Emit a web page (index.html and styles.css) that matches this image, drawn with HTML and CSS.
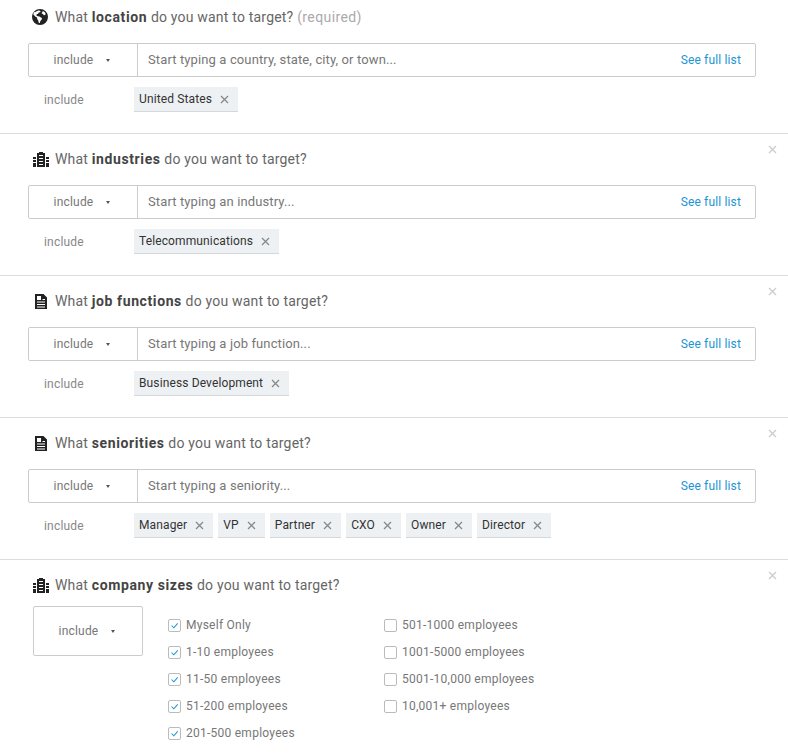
FILE: index.html
```html
<!DOCTYPE html>
<html lang="en">
<head>
<meta charset="utf-8">
<title>Targeting</title>
<link rel="stylesheet" href="styles.css">
</head>
<body>
<svg class="defs" width="0" height="0" aria-hidden="true">
  <symbol id="i-globe" viewBox="0 0 16 16">
    <path fill-rule="evenodd" d="M8 0a8 8 0 1 0 0 16A8 8 0 0 0 8 0zM3.200 3.200C4.400 2 6 1.400 7.400 1.400l1.200.9-.5 1-1.300.2-.7 1.200-1.500.5-.2 1.300 1.300.8 1.800.1 1.300 1 1.200.5-.3 1.500-1.300 1.500-.6 2-1 .1-.6-2.600-1-1.400-.2-1.500-1.800-1-1.900-2.200c.1-.9.5-1.600 1.400-2.600zM10.300 1.800c1.400.5 2.600 1.400 3.300 2.700l-.4 1.500-1.300.2-1-1.300-1.200-.3.3-1.300.9-.4z"/>
  </symbol>
  <symbol id="i-building" viewBox="0 0 16 15">
    <path fill-rule="evenodd" d="M6 0h4v1h2v14H4V1h2zM6 3v1h4V3zM6 6v1h4V6zM6 9v1h4V9zM6 12v1h4v-1z"/>
    <path d="M0 5h3v2H0zM0 8h3v2H0zM0 11h3v4H0zM13 5h3v2h-3zM13 8h3v2h-3zM13 11h3v4h-3z"/>
  </symbol>
  <symbol id="i-doc" viewBox="0 0 12 15">
    <path fill-rule="evenodd" d="M0 0h8.500L12 3.500V15H0zM2 2v4h4V2zM7.500 5v1H10V5zM2 7.500v1h8v-1zM2 10v1h8v-1zM2 12.500v1h8v-1z"/>
  </symbol>
  <symbol id="i-x" viewBox="0 0 9 9">
    <path d="M1 1l7 7M8 1L1 8" fill="none" stroke="currentColor" stroke-width="1.300"/>
  </symbol>
  <symbol id="i-check" viewBox="0 0 13 13">
    <path d="M3 6.500l2.700 2.700L10.300 4" fill="none" stroke="#1b95d4" stroke-width="1.200"/>
  </symbol>
</svg>

<section class="block block-first">
  <h2 class="title"><svg class="icon icon-globe"><use href="#i-globe"/></svg><span>What <b>location</b> do you want to target? <em>(required)</em></span></h2>
  <div class="search">
    <div class="select">include <i class="caret"></i></div>
    <div class="placeholder">Start typing a country, state, city, or town...</div>
    <a class="full" href="#">See full list</a>
  </div>
  <div class="chosen">
    <span class="mode">include</span>
    <span class="chip">United States <svg class="chip-x"><use href="#i-x"/></svg></span>
  </div>
</section>

<section class="block">
  <svg class="close"><use href="#i-x"/></svg>
  <h2 class="title"><svg class="icon icon-building"><use href="#i-building"/></svg><span>What <b>industries</b> do you want to target?</span></h2>
  <div class="search">
    <div class="select">include <i class="caret"></i></div>
    <div class="placeholder">Start typing an industry...</div>
    <a class="full" href="#">See full list</a>
  </div>
  <div class="chosen">
    <span class="mode">include</span>
    <span class="chip">Telecommunications <svg class="chip-x"><use href="#i-x"/></svg></span>
  </div>
</section>

<section class="block">
  <svg class="close"><use href="#i-x"/></svg>
  <h2 class="title"><svg class="icon icon-doc"><use href="#i-doc"/></svg><span>What <b>job functions</b> do you want to target?</span></h2>
  <div class="search">
    <div class="select">include <i class="caret"></i></div>
    <div class="placeholder">Start typing a job function...</div>
    <a class="full" href="#">See full list</a>
  </div>
  <div class="chosen">
    <span class="mode">include</span>
    <span class="chip">Business Development <svg class="chip-x"><use href="#i-x"/></svg></span>
  </div>
</section>

<section class="block">
  <svg class="close"><use href="#i-x"/></svg>
  <h2 class="title"><svg class="icon icon-doc"><use href="#i-doc"/></svg><span>What <b>seniorities</b> do you want to target?</span></h2>
  <div class="search">
    <div class="select">include <i class="caret"></i></div>
    <div class="placeholder">Start typing a seniority...</div>
    <a class="full" href="#">See full list</a>
  </div>
  <div class="chosen">
    <span class="mode">include</span>
    <span class="chip">Manager <svg class="chip-x"><use href="#i-x"/></svg></span>
    <span class="chip">VP <svg class="chip-x"><use href="#i-x"/></svg></span>
    <span class="chip">Partner <svg class="chip-x"><use href="#i-x"/></svg></span>
    <span class="chip">CXO <svg class="chip-x"><use href="#i-x"/></svg></span>
    <span class="chip">Owner <svg class="chip-x"><use href="#i-x"/></svg></span>
    <span class="chip">Director <svg class="chip-x"><use href="#i-x"/></svg></span>
  </div>
</section>

<section class="block block-last">
  <svg class="close"><use href="#i-x"/></svg>
  <h2 class="title"><svg class="icon icon-building"><use href="#i-building"/></svg><span>What <b>company sizes</b> do you want to target?</span></h2>
  <div class="sizes">
    <div class="select select-box">include <i class="caret"></i></div>
    <ul class="checks">
      <li><span class="box"><svg><use href="#i-check"/></svg></span>Myself Only</li>
      <li><span class="box"><svg><use href="#i-check"/></svg></span>1-10 employees</li>
      <li><span class="box"><svg><use href="#i-check"/></svg></span>11-50 employees</li>
      <li><span class="box"><svg><use href="#i-check"/></svg></span>51-200 employees</li>
      <li><span class="box"><svg><use href="#i-check"/></svg></span>201-500 employees</li>
    </ul>
    <ul class="checks">
      <li><span class="box"></span>501-1000 employees</li>
      <li><span class="box"></span>1001-5000 employees</li>
      <li><span class="box"></span>5001-10,000 employees</li>
      <li><span class="box"></span>10,001+ employees</li>
    </ul>
  </div>
</section>
</body>
</html>
```

FILE: styles.css
```css
* { box-sizing: border-box; }
html, body { margin: 0; padding: 0; }
body {
  width: 788px;
  height: 753px;
  overflow: hidden;
  background: #fff;
  font-family: Roboto, "Liberation Sans", sans-serif;
  color: #666;
}
.defs { position: absolute; }
.block {
  position: relative;
  height: 142px;
  padding: 15px 32px 0 28px;
  border-bottom: 1px solid #ddd;
}
.block-first { height: 134px; padding-top: 7px; }
.block-last { height: 193px; border-bottom: 0; }
.title {
  display: flex;
  align-items: center;
  height: 20px;
  margin: 0;
  font-size: 14px;
  font-weight: 400;
  letter-spacing: 0.2px;
  color: #666;
}
.title b { font-weight: 700; letter-spacing: 0.6px; color: #444; }
.title em { font-style: normal; letter-spacing: 0.4px; color: #aaa; }
.icon { display: block; fill: #222; }
.icon-globe { width: 16px; height: 16px; margin-left: 4px; margin-right: 7px; }
.icon-building { width: 16px; height: 15px; margin-left: 5px; margin-right: 6px; }
.icon-doc { width: 12px; height: 15px; margin-left: 7px; margin-right: 8px; }
.search {
  display: flex;
  align-items: center;
  height: 34px;
  margin-top: 16px;
  border: 1px solid #ccc;
  border-radius: 2px;
}
.select {
  display: flex;
  align-items: center;
  justify-content: center;
  gap: 13px;
  width: 109px;
  height: 100%;
  padding-right: 2px;
  border-right: 1px solid #ccc;
  font-size: 12px;
  letter-spacing: 0.2px;
  color: #777;
}
.caret {
  width: 0;
  height: 0;
  border-left: 2px solid transparent;
  border-right: 2px solid transparent;
  border-top: 3px solid #555;
}
.placeholder { flex: 1; padding: 0 0 2px 10px; font-size: 13px; letter-spacing: 0.12px; color: #777; }
.full { padding-right: 14px; color: #1b95d4; text-decoration: none; font-size: 12px; letter-spacing: 0.15px; }
.chosen { display: flex; align-items: flex-start; margin-top: 10px; }
.mode { width: 106px; padding: 6px 0 0 16px; font-size: 12px; letter-spacing: 0.2px; color: #888; }
.chip {
  display: flex;
  align-items: center;
  height: 25px;
  margin-right: 5px;
  padding: 0 9px 1px 5px;
  background: #eef1f4;
  border-bottom: 1px solid #d5d8db;
  font-size: 12px;
  letter-spacing: 0.12px;
  color: #333;
  white-space: pre;
}
.chip-x { width: 9px; height: 9px; margin: 2px 0 0 5px; color: #888; }
.close { position: absolute; top: 11px; right: 11px; width: 9px; height: 9px; color: #ccc; }
.sizes { display: flex; align-items: flex-start; margin-top: 11px; padding-left: 5px; }
.select-box { width: 110px; height: 50px; border: 1px solid #ccc; border-radius: 2px; }
.checks { width: 216px; margin: 0; padding: 5px 0 0; list-style: none; font-size: 12px; letter-spacing: 0.25px; color: #777; }
.sizes .checks:nth-child(2) { margin-left: 25px; }
.checks li { display: flex; align-items: center; height: 27px; white-space: nowrap; }
.box {
  display: block;
  width: 13px;
  height: 13px;
  margin: 2px 5px 0 0;
  border: 1px solid #bbb;
  border-radius: 2px;
}
.box svg { display: block; width: 11px; height: 11px; }
```
